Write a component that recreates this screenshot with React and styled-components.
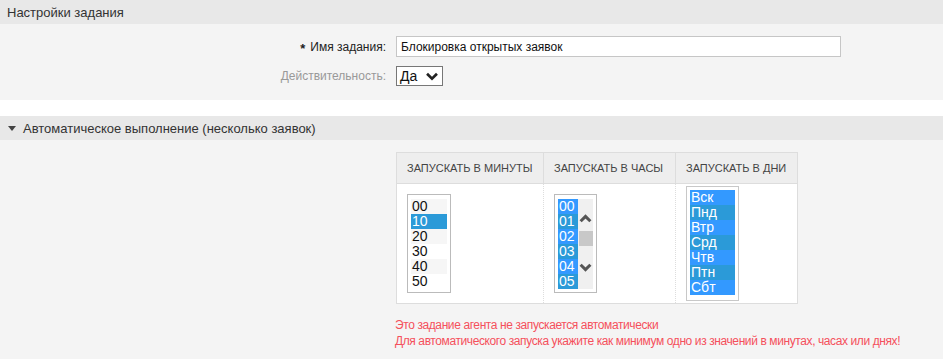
import React from 'react'
import styled, { createGlobalStyle } from 'styled-components'

const GlobalStyle = createGlobalStyle`
  html, body {
    margin: 0;
    padding: 0;
    background: #f4f4f4;
  }
  body {
    font-family: "Liberation Sans", Arial, sans-serif;
    font-size: 12px;
    color: #333;
  }
`

const Page = styled.div`
  display: flex;
  flex-direction: column;
  min-height: 359px;
`

const SectionHeader = styled.div`
  display: flex;
  align-items: center;
  gap: 7px;
  height: 24px;
  padding-left: ${p => (p.$toggle ? 8 : 7)}px;
  background: #e8e8e8;
  font-size: 13px;
  color: #333;
`

const Triangle = styled.span`
  width: 0;
  height: 0;
  border-left: 4px solid transparent;
  border-right: 4px solid transparent;
  border-top: 5px solid #444;
  margin-top: 1px;
`

const SettingsBody = styled.div`
  background: #f4f4f4;
  height: 76px;
  box-sizing: border-box;
  padding-top: 12px;
  display: flex;
  flex-direction: column;
  gap: 9px;
`

const Gap = styled.div`
  height: 16px;
  background: #fff;
`

const FormRow = styled.div`
  display: grid;
  grid-template-columns: 386px auto;
  column-gap: 10px;
  align-items: center;
`

const Label = styled.label`
  text-align: right;
  font-size: 12px;
  color: ${p => (p.$muted ? '#999' : '#222')};
`

const Star = styled.span`
  display: inline-block;
  font-size: 13px;
  font-weight: bold;
  margin-right: 5px;
  color: #222;
  transform: translateY(2px);
`

const TextInput = styled.div`
  width: 445px;
  height: 21px;
  box-sizing: border-box;
  border: 1px solid #c6c6c6;
  background: #fff;
  padding: 0 4px;
  font-size: 12px;
  color: #111;
  display: flex;
  align-items: center;
`

const DropSelect = styled.div`
  width: 47px;
  height: 20px;
  box-sizing: border-box;
  border: 1px solid #777;
  background: #fff;
  display: flex;
  align-items: center;
  justify-content: space-between;
  padding: 0 3px 0 3px;
  font-size: 14px;
  color: #111;
`

const AutoBody = styled.div`
  flex: 1;
  background: #f4f4f4;
  padding: 12px 0 0 396px;
`

const Table = styled.div`
  display: grid;
  grid-template-columns: 146px 132px 122px;
  width: 402px;
  box-sizing: border-box;
  border: 1px solid #ddd;
  background: #fff;
`

const HeadCell = styled.div`
  height: 30px;
  display: flex;
  align-items: center;
  padding-left: 10px;
  background: #eee;
  border-bottom: 1px solid #ddd;
  border-left: ${p => (p.$first ? 'none' : '1px solid #ddd')};
  font-size: 11px;
  color: #444;
  text-transform: uppercase;
  white-space: nowrap;
`

const BodyCell = styled.div`
  height: 119px;
  display: flex;
  align-items: center;
  padding-left: 10px;
  border-left: ${p => (p.$first ? 'none' : '1px dotted #ddd')};
`

const ListBox = styled.div`
  box-sizing: border-box;
  width: ${p => p.$width}px;
  height: ${p => p.$height}px;
  border: 1px solid ${p => p.$border || '#bbb'};
  background: #fff;
  padding: ${p => p.$pad || '4px 3px 3px'};
  display: flex;
`

const Options = styled.div`
  display: flex;
  flex-direction: column;
  width: ${p => p.$width}px;
  overflow: hidden;
`

const Option = styled.div`
  height: 15px;
  line-height: 15px;
  flex-shrink: 0;
  padding-left: 1px;
  font-size: 14px;
  color: ${p => (p.$selected ? '#fff' : '#111')};
  background: ${p =>
    p.$selected
      ? p.$odd
        ? '#2b9ad8'
        : '#3399ff'
      : p.$odd
        ? '#fff'
        : '#f6f6f6'};
`

const Scrollbar = styled.div`
  width: 15px;
  background: #f0f0f0;
  display: flex;
  flex-direction: column;
  align-items: center;
  padding-top: 14px;
  box-sizing: border-box;
`

const Thumb = styled.div`
  width: 14px;
  height: 15px;
  background: #c8c8c8;
  margin: 7px 0 16px;
`

const Messages = styled.div`
  margin-top: 13px;
  margin-left: -1px;
  font-size: 12px;
  letter-spacing: -0.4px;
  line-height: 16px;
  color: #f4505c;
`

const Chevron = ({ up, w = 12, h = 10, color = '#555', stroke = 2.4 }) => (
  <svg width={w} height={h} viewBox="0 0 12 10">
    <polyline
      points={up ? '1.5,7.5 6,3 10.5,7.5' : '1.5,2.5 6,7 10.5,2.5'}
      fill="none"
      stroke={color}
      strokeWidth={stroke}
    />
  </svg>
)

const minutes = ['00', '10', '20', '30', '40', '50']
const hours = ['00', '01', '02', '03', '04', '05']
const days = ['Вск', 'Пнд', 'Втр', 'Срд', 'Чтв', 'Птн', 'Сбт']

function OptionList({ items, isSelected, width }) {
  return (
    <Options $width={width}>
      {items.map((item, i) => (
        <Option key={item} $odd={i % 2 === 1} $selected={isSelected(item)}>
          {item}
        </Option>
      ))}
    </Options>
  )
}

export default function App() {
  return (
    <Page>
      <GlobalStyle />
      <SectionHeader>Настройки задания</SectionHeader>
      <SettingsBody>
        <FormRow>
          <Label>
            <Star>*</Star>Имя задания:
          </Label>
          <TextInput>Блокировка открытых заявок</TextInput>
        </FormRow>
        <FormRow>
          <Label $muted>Действительность:</Label>
          <DropSelect>
            <span>Да</span>
            <Chevron w={14} h={11} color="#222" stroke={2.4} />
          </DropSelect>
        </FormRow>
      </SettingsBody>
      <Gap />
      <SectionHeader $toggle>
        <Triangle />
        Автоматическое выполнение (несколько заявок)
      </SectionHeader>
      <AutoBody>
        <Table>
          <HeadCell $first>Запускать в минуты</HeadCell>
          <HeadCell>Запускать в часы</HeadCell>
          <HeadCell>Запускать в дни</HeadCell>

          <BodyCell $first>
            <ListBox $width={44} $height={99}>
              <OptionList items={minutes} width={36} isSelected={m => m === '10'} />
            </ListBox>
          </BodyCell>
          <BodyCell>
            <ListBox $width={43} $height={99} $pad="4px 3px 3px">
              <OptionList items={hours} width={20} isSelected={() => true} />
              <Scrollbar>
                <Chevron up w={13} h={11} stroke={2.8} />
                <Thumb />
                <Chevron w={13} h={11} stroke={2.8} />
              </Scrollbar>
            </ListBox>
          </BodyCell>
          <BodyCell>
            <ListBox $width={53} $height={115} $border="#c8c8c8" $pad="3px 3px 5px">
              <OptionList items={days} width={45} isSelected={() => true} />
            </ListBox>
          </BodyCell>
        </Table>
        <Messages>
          <div>Это задание агента не запускается автоматически</div>
          <div>Для автоматического запуска укажите как минимум одно из значений в минутах, часах или днях!</div>
        </Messages>
      </AutoBody>
    </Page>
  )
}
